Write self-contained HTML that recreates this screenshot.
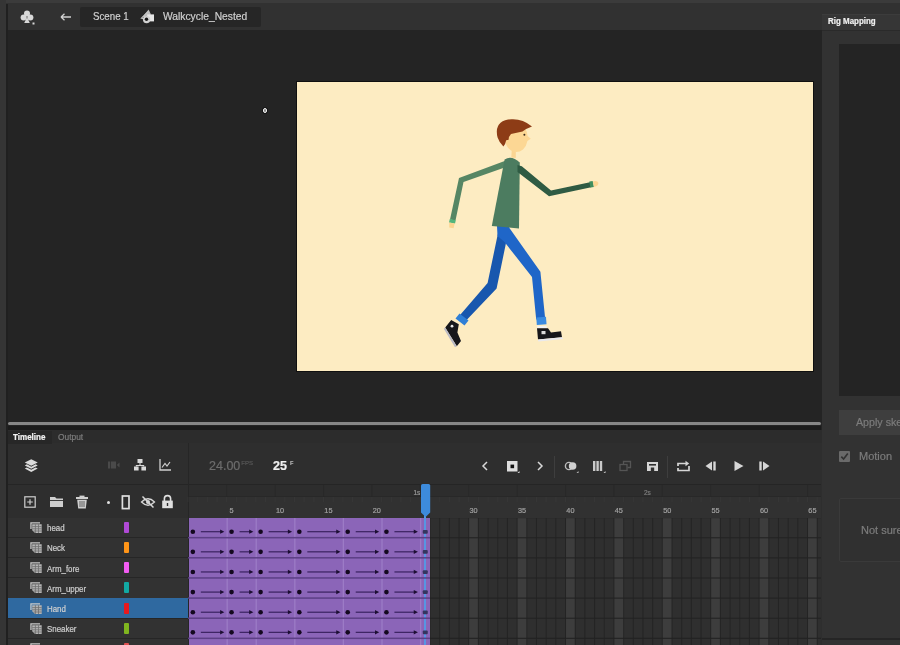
<!DOCTYPE html><html><head><meta charset="utf-8"><title>Animate</title><style>
*{margin:0;padding:0;box-sizing:border-box}
html,body{width:900px;height:645px;overflow:hidden;background:#242424;font-family:"Liberation Sans",sans-serif;}
#app{position:relative;width:900px;height:645px;overflow:hidden;background:#242424;filter:blur(0.45px)}
.abs{position:absolute}
.t{position:absolute;white-space:nowrap;line-height:1;-webkit-text-stroke:.2px currentColor}
</style></head><body><div id="app">
<div class="abs" style="left:0;top:0;width:900px;height:30px;background:#313131"></div>
<div class="abs" style="left:0;top:0;width:900px;height:3px;background:#3b3b3b"></div>
<div class="abs" style="left:80px;top:7px;width:181px;height:20px;background:#262626;border-radius:2px"></div>
<div class="abs" style="left:0;top:0;width:6px;height:645px;background:#353535"></div>
<div class="abs" style="left:6px;top:4px;width:1.5px;height:641px;background:#202020"></div>
<div class="t" style="left:93px;top:11px;font-size:11px;color:#d0d0d0;transform:scaleX(.885);transform-origin:0 0">Scene 1</div>
<div class="t" style="left:163px;top:11px;font-size:11px;color:#d0d0d0;transform:scaleX(.935);transform-origin:0 0">Walkcycle_Nested</div>
<svg class="abs" style="left:19px;top:9.3px" width="18" height="18" viewBox="0 0 18 18"><g fill="#d8d8d8"><circle cx="8" cy="4.6" r="3"/><circle cx="4.6" cy="8.6" r="3"/><circle cx="11.4" cy="8.6" r="3"/><path d="M8 8 L5.2 14 H10.8 Z"/><rect x="13.5" y="13.5" width="2" height="2"/></g></svg>
<svg class="abs" style="left:60px;top:11px" width="12" height="12" viewBox="0 0 12 12"><path d="M1 6 H11 M1 6 L4.5 2.8 M1 6 L4.5 9.2" stroke="#d0d0d0" stroke-width="1.3" fill="none"/></svg>
<svg class="abs" style="left:140px;top:8px" width="16" height="18" viewBox="140 8 16 18"><path d="M148.6 9.6 L151 14.6 L145 17 L142 17.6Z" fill="#bdbdbd"/><path d="M148.4 11.5 L141.4 18.2 L145 19" stroke="#c4c4c4" stroke-width="1.1" fill="none"/><rect x="147.2" y="14.4" width="6.8" height="7" fill="#e6e6e6"/><circle cx="146.6" cy="19.6" r="3.7" fill="#d2d2d2"/><circle cx="146.5" cy="19.3" r="1.7" fill="#161616"/></svg>
<div class="abs" style="left:296px;top:81px;width:518px;height:291px;background:#101010"></div>
<div class="abs" style="left:297px;top:82px;width:516px;height:289px;background:#fdecc2"></div>
<div class="abs" style="left:262.6px;top:108px;width:4.6px;height:4.6px;border-radius:50%;border:1.3px solid #f0f0f0;background:#888;box-shadow:0 0 0 .8px #111"></div>
<svg class="abs" style="left:297px;top:82px" width="516" height="289" viewBox="297 82 516 289">
<!-- back arm -->
<path d="M506 160.5 L459 178 L450 219.5 L455.5 220.5 L463.5 182 L507.5 166.5Z" fill="#568664"/>
<path d="M449.8 219 L455.8 220.2 L455 223.6 L449 222.4Z" fill="#52b57c"/>
<path d="M449.3 222.4 L454.6 223.5 L453.6 228.2 L449.2 227.4Z" fill="#fbd592"/>
<!-- back leg -->
<path d="M499.5 226 L509.5 226 L496.6 288.5 L465.2 321.6 L458.8 316.4 L487.6 283Z" fill="#1857ae"/>
<path d="M459.5 313.5 L468.5 320.5 L464.5 325.5 L455.5 318.5Z" fill="#2f7fd6"/>
<!-- back shoe -->
<path d="M451.2 320 L458.8 324.2 L457.4 332.5 L461 341 L456.8 346.2 L445.2 327.5Z" fill="#17171b"/>
<path d="M445.2 327.5 L456.8 346.2 L455 347.2 L443.8 328.8Z" fill="#b9b9c4"/>
<circle cx="452" cy="326.2" r="1.4" fill="#e8e8e8"/>
<!-- front leg -->
<path d="M497 226 L508 226 L540.4 271.8 L545.2 319 L536.2 319.5 L532 277 L504.5 242 L497.5 236Z" fill="#1f66c8"/>
<path d="M536.3 317.5 L546 316.8 L546.5 324.3 L536.8 325Z" fill="#3a8be0"/>
<!-- front shoe -->
<path d="M537.5 326 L546.5 326 L547 328.3 L537 328.3Z" fill="#f2f2f2"/>
<path d="M537 328.3 L548 328.3 L551 332.5 L561 331.2 L562 337.3 L538 339.6Z" fill="#17171b"/>
<path d="M538 339.6 L562 337.3 L563.3 339 L538.3 341.6Z" fill="#e9e9ee"/>
<path d="M541.5 331 h4 v3.2 h-4Z" fill="#dcdcdc"/>
<!-- torso -->
<path d="M504.6 159.6 Q511.5 154.8 519.8 162.6 L519 228.5 L491.8 226Z" fill="#4c7c60"/>
<!-- neck -->
<path d="M511.8 149.5 L515.8 149.5 L515.8 158 L511.3 157.6Z" fill="#fbd592"/>
<!-- head -->
<path d="M505 136 Q504.6 146.5 511 150.6 Q517.5 153.8 523 149.4 Q526.6 146 527.4 141 L530.8 138.8 L527.6 136 Q527.4 132 525.6 129.5 L508 130Z" fill="#fcd794"/>
<path d="M496.8 131.5 Q497 120 511.5 119.2 Q522.5 118.6 532 126.4 Q526.5 128.2 522.5 131.6 L511 134 Q508.6 136.4 508.6 139.8 L506.2 140.2 Q505.6 143.8 503.4 146.4 Q499.4 143 497.6 137.5 Q496.8 134.5 496.8 131.5Z" fill="#8d3c16"/>
<circle cx="524.4" cy="134.8" r="1" fill="#3a2a1a"/>
<!-- front arm -->
<path d="M517.5 165 L521.8 166.3 L551 190.5 L590 182.3 L591.2 187.3 L549 196.2 L517.5 172Z" fill="#2f5b43"/>
<path d="M589.3 181.6 L592.7 181 L593.9 187 L590.4 187.6Z" fill="#3f8e5e"/>
<path d="M592.8 181.4 Q597.5 180.2 598.3 182.8 Q598.8 186 594 187Z" fill="#fbd592"/>
</svg>
<div class="abs" style="left:8px;top:421.6px;width:813px;height:3.4px;background:#868686;border-radius:1.5px"></div>
<div class="abs" style="left:8px;top:425.5px;width:813px;height:5px;background:#1b1b1b"></div>
<div class="abs" style="left:822px;top:0;width:78px;height:645px;background:#323232"></div>
<div class="abs" style="left:822px;top:0;width:78px;height:3px;background:#3b3b3b"></div>
<div class="abs" style="left:822px;top:3px;width:78px;height:11px;background:#313131"></div>
<div class="abs" style="left:822px;top:14px;width:78px;height:16px;background:#363636"></div>
<div class="abs" style="left:822px;top:14px;width:78px;height:1px;background:#3c3c3c"></div>
<div class="abs" style="left:822px;top:30px;width:78px;height:1px;background:#2a2a2a"></div>
<div class="t" style="left:828px;top:17px;font-size:8.5px;font-weight:bold;color:#f0f0f0;transform:scaleX(.935);transform-origin:0 0">Rig Mapping</div>
<div class="abs" style="left:839px;top:44px;width:61px;height:352px;background:#242424"></div>
<div class="abs" style="left:839px;top:410px;width:61px;height:25px;background:#3e3e3e"></div>
<div class="t" style="left:856px;top:417px;font-size:11px;color:#7c7c7c;transform:scaleX(.97);transform-origin:0 0">Apply skeleton</div>
<div class="abs" style="left:839px;top:451px;width:11px;height:11px;background:#6a6a6a;border-radius:1px"></div>
<svg class="abs" style="left:839px;top:451px" width="11" height="11" viewBox="0 0 11 11"><path d="M2.3 5.6 L4.6 8 L8.8 2.6" stroke="#323232" stroke-width="1.7" fill="none"/></svg>
<div class="t" style="left:859px;top:451px;font-size:11px;color:#7c7c7c">Motion</div>
<div class="abs" style="left:839px;top:498px;width:70px;height:64px;border:1px solid #3a3a3a;border-radius:2px;background:#303030"></div>
<div class="t" style="left:861px;top:525px;font-size:11px;color:#7c7c7c">Not sure</div>
<div class="abs" style="left:822px;top:637.8px;width:78px;height:1.8px;background:#252525"></div>
<div class="abs" style="left:8px;top:430px;width:814px;height:215px;background:#2e2e2e"></div>
<div class="abs" style="left:8px;top:430px;width:814px;height:13px;background:#2c2c2c"></div>
<div class="abs" style="left:8px;top:430.5px;width:44px;height:13px;background:#272727"></div>
<div class="t" style="left:13px;top:433px;font-size:8.4px;font-weight:bold;color:#f2f2f2;transform:scaleX(.96);transform-origin:0 0">Timeline</div>
<div class="t" style="left:58px;top:433px;font-size:8.4px;color:#7c7c7c;transform:scaleX(1.0);transform-origin:0 0">Output</div>
<div class="abs" style="left:8px;top:484px;width:813px;height:1px;background:#252525"></div>
<div class="abs" style="left:188px;top:443px;width:1px;height:202px;background:#262626"></div>
<div class="t" style="left:209px;top:460.4px;font-size:12.5px;color:#6d6d6d">24.00<span style="font-size:6px;position:relative;top:-5px;left:1px;color:#565656">FPS</span></div>
<div class="t" style="left:273px;top:460.4px;font-size:12.5px;font-weight:bold;color:#f0f0f0">25<span style="font-size:5.5px;position:relative;top:-5.5px;left:3px;color:#b0b0b0">F</span></div>
<svg class="abs" style="left:23px;top:458px" width="16.5" height="16.5" viewBox="0 0 14 14"><g fill="#dcdcdc"><path d="M7 1 L12.5 3.8 L7 6.6 L1.5 3.8Z"/><path d="M1.5 6.3 L3.3 5.4 L7 7.4 L10.7 5.4 L12.5 6.3 L7 9.2Z"/><path d="M1.5 8.9 L3.3 8 L7 10 L10.7 8 L12.5 8.9 L7 11.8Z"/></g></svg>
<svg class="abs" style="left:107px;top:459px" width="14" height="12" viewBox="0 0 14 12"><g fill="#4a4a4a"><rect x="1" y="2.5" width="2" height="7"/><rect x="3.8" y="2.5" width="5.2" height="7"/><path d="M9.8 6 L12.5 3.6 V8.4Z"/></g></svg>
<svg class="abs" style="left:133px;top:458px" width="14" height="14" viewBox="0 0 14 14"><g fill="#d8d8d8"><rect x="4.5" y="1" width="5" height="4"/><rect x="1" y="8.5" width="4.6" height="4"/><rect x="8.4" y="8.5" width="4.6" height="4"/><path d="M6.5 5 h1 v2 h3.7 v1.5 h-1 v-.6 h-6.4 v.6 h-1 v-1.5 h3.7Z"/></g></svg>
<svg class="abs" style="left:158px;top:458px" width="14" height="14" viewBox="0 0 14 14"><path d="M2 1 V12 H13" stroke="#cfcfcf" stroke-width="1.3" fill="none"/><path d="M4 9.5 L7 5.5 L9 8 L12 4" stroke="#cfcfcf" stroke-width="1.2" fill="none"/></svg>
<svg class="abs" style="left:480px;top:460px" width="10" height="12" viewBox="0 0 10 12"><path d="M7 2 L3 6 L7 10" stroke="#d8d8d8" stroke-width="1.5" fill="none"/></svg>
<svg class="abs" style="left:506px;top:460px" width="14" height="14" viewBox="0 0 14 14"><rect x="1" y="1" width="10.5" height="10.5" fill="#dedede"/><rect x="4.5" y="4.6" width="3.6" height="3.6" fill="#111"/><path d="M11.5 13 h2 v-2Z" fill="#d8d8d8"/></svg>
<svg class="abs" style="left:535px;top:460px" width="10" height="12" viewBox="0 0 10 12"><path d="M3 2 L7 6 L3 10" stroke="#d8d8d8" stroke-width="1.5" fill="none"/></svg>
<div class="abs" style="left:554px;top:456px;width:1px;height:22px;background:#3e3e3e"></div>
<svg class="abs" style="left:564px;top:460px" width="15" height="14" viewBox="0 0 15 14"><circle cx="5" cy="6" r="3.6" fill="none" stroke="#bdbdbd" stroke-width="1.4"/><circle cx="8.6" cy="6" r="3.8" fill="#d0d0d0"/><path d="M12.5 13 h2 v-2Z" fill="#bbb"/></svg>
<svg class="abs" style="left:592px;top:460px" width="14" height="14" viewBox="0 0 14 14"><g fill="#c9c9c9"><rect x="1" y="1" width="2.4" height="10"/><rect x="4.4" y="1" width="2.4" height="10"/><rect x="7.8" y="1" width="2.4" height="10"/><path d="M11.5 13 h2 v-2Z"/></g></svg>
<svg class="abs" style="left:619px;top:460px" width="14" height="14" viewBox="0 0 14 14"><g fill="none" stroke="#555" stroke-width="1.3"><rect x="1" y="4.5" width="7" height="6"/><path d="M4.5 4 V1.5 H11.5 V7.5 H8.5"/></g></svg>
<svg class="abs" style="left:646px;top:460px" width="14" height="14" viewBox="0 0 14 14"><path d="M1 2 H12 V11 H8.2 V7.5 H4.8 V11 H1Z" fill="#d6d6d6"/><rect x="3" y="4" width="7" height="1.6" fill="#2e2e2e"/></svg>
<div class="abs" style="left:667.3px;top:456px;width:1px;height:22px;background:#3e3e3e"></div>
<svg class="abs" style="left:676px;top:460px" width="15" height="13" viewBox="0 0 15 13"><path d="M2 6 V3.5 H11 M13 6 V10.5 H2 V8" stroke="#d6d6d6" stroke-width="1.7" fill="none"/><path d="M9.5 0.7 L13.2 3.5 L9.5 6.3Z" fill="#d6d6d6"/></svg>
<svg class="abs" style="left:704px;top:460px" width="13" height="12" viewBox="0 0 13 12"><path d="M8 1.5 L1.5 6 L8 10.5Z" fill="#d6d6d6"/><rect x="9.3" y="1.5" width="2.4" height="9" fill="#d6d6d6"/></svg>
<svg class="abs" style="left:733px;top:460px" width="12" height="12" viewBox="0 0 12 12"><path d="M1.5 1 L10.5 6 L1.5 11Z" fill="#d6d6d6"/></svg>
<svg class="abs" style="left:758px;top:460px" width="13" height="12" viewBox="0 0 13 12"><rect x="1.3" y="1.5" width="2.4" height="9" fill="#d6d6d6"/><path d="M5 1.5 L11.5 6 L5 10.5Z" fill="#d6d6d6"/></svg>
<svg class="abs" style="left:24px;top:496px" width="12" height="12" viewBox="0 0 12 12"><rect x="0.8" y="0.8" width="10.4" height="10.4" fill="none" stroke="#cfcfcf" stroke-width="1.2"/><path d="M6 3.2 V8.8 M3.2 6 H8.8" stroke="#cfcfcf" stroke-width="1.2"/></svg>
<svg class="abs" style="left:49px;top:495px" width="15" height="13" viewBox="0 0 15 13"><path d="M1 2 H6 L7.5 3.6 H14 V12 H1Z" fill="#cfcfcf"/><rect x="1" y="5" width="13" height="0.9" fill="#2e2e2e"/></svg>
<svg class="abs" style="left:75px;top:495px" width="14" height="14" viewBox="0 0 14 14"><g fill="#cfcfcf"><rect x="4.5" y="0.6" width="5" height="1.6"/><rect x="1" y="2" width="12" height="2"/><path d="M2.2 4.8 H11.8 L10.8 13.4 H3.2Z"/></g><path d="M5 6 V12 M7 6 V12 M9 6 V12" stroke="#2e2e2e" stroke-width="0.7"/></svg>
<div class="abs" style="left:106.5px;top:500.5px;width:3px;height:3px;border-radius:50%;background:#e0e0e0"></div>
<svg class="abs" style="left:121px;top:495px" width="10" height="15" viewBox="0 0 10 15"><rect x="1.4" y="1" width="6.6" height="12.6" fill="none" stroke="#e0e0e0" stroke-width="1.7"/></svg>
<svg class="abs" style="left:140px;top:495px" width="16" height="14" viewBox="0 0 16 14"><path d="M1.5 7 Q8 0.5 14.5 7 Q8 13.5 1.5 7Z" fill="none" stroke="#d8d8d8" stroke-width="1.3"/><circle cx="8" cy="7" r="2" fill="#d8d8d8"/><path d="M2.5 1.5 L13.5 12.5" stroke="#d8d8d8" stroke-width="1.5"/></svg>
<svg class="abs" style="left:161px;top:494px" width="13" height="15" viewBox="0 0 13 15"><path d="M3.4 7 V4.6 Q3.4 1.6 6.5 1.6 Q9.6 1.6 9.6 4.6 V7" fill="none" stroke="#e0e0e0" stroke-width="1.6"/><rect x="1.2" y="6.6" width="10.6" height="7.6" fill="#e0e0e0"/><rect x="5.8" y="9" width="1.4" height="3" fill="#2e2e2e"/></svg>
<div class="abs" style="left:189px;top:485px;width:632px;height:33px;background:#2d2d2d"></div>
<div class="abs" style="left:189px;top:496.5px;width:632px;height:21.5px;background:#313131"></div>
<div class="abs" style="left:189px;top:496px;width:632px;height:1px;background:#282828"></div>
<svg class="abs" style="left:0;top:485px" width="821" height="33" viewBox="0 485 821 33"><rect x="187.50" y="497" width="1" height="5" fill="#3a3a3a" opacity=".6"/><rect x="197.18" y="497" width="1" height="5" fill="#3a3a3a" opacity=".6"/><rect x="206.86" y="497" width="1" height="5" fill="#3a3a3a" opacity=".6"/><rect x="216.54" y="497" width="1" height="5" fill="#3a3a3a" opacity=".6"/><rect x="226.22" y="485" width="1" height="12" fill="#262626" opacity=".7"/><rect x="226.22" y="497" width="1" height="5" fill="#3a3a3a" opacity=".6"/><rect x="235.90" y="497" width="1" height="5" fill="#3a3a3a" opacity=".6"/><rect x="245.58" y="497" width="1" height="5" fill="#3a3a3a" opacity=".6"/><rect x="255.26" y="497" width="1" height="5" fill="#3a3a3a" opacity=".6"/><rect x="264.94" y="497" width="1" height="5" fill="#3a3a3a" opacity=".6"/><rect x="274.62" y="485" width="1" height="12" fill="#262626" opacity=".7"/><rect x="274.62" y="497" width="1" height="5" fill="#3a3a3a" opacity=".6"/><rect x="284.30" y="497" width="1" height="5" fill="#3a3a3a" opacity=".6"/><rect x="293.98" y="497" width="1" height="5" fill="#3a3a3a" opacity=".6"/><rect x="303.66" y="497" width="1" height="5" fill="#3a3a3a" opacity=".6"/><rect x="313.34" y="497" width="1" height="5" fill="#3a3a3a" opacity=".6"/><rect x="323.02" y="485" width="1" height="12" fill="#262626" opacity=".7"/><rect x="323.02" y="497" width="1" height="5" fill="#3a3a3a" opacity=".6"/><rect x="332.70" y="497" width="1" height="5" fill="#3a3a3a" opacity=".6"/><rect x="342.38" y="497" width="1" height="5" fill="#3a3a3a" opacity=".6"/><rect x="352.06" y="497" width="1" height="5" fill="#3a3a3a" opacity=".6"/><rect x="361.74" y="497" width="1" height="5" fill="#3a3a3a" opacity=".6"/><rect x="371.42" y="485" width="1" height="12" fill="#262626" opacity=".7"/><rect x="371.42" y="497" width="1" height="5" fill="#3a3a3a" opacity=".6"/><rect x="381.10" y="497" width="1" height="5" fill="#3a3a3a" opacity=".6"/><rect x="390.78" y="497" width="1" height="5" fill="#3a3a3a" opacity=".6"/><rect x="400.46" y="497" width="1" height="5" fill="#3a3a3a" opacity=".6"/><rect x="410.14" y="497" width="1" height="5" fill="#3a3a3a" opacity=".6"/><rect x="419.82" y="485" width="1" height="12" fill="#262626" opacity=".7"/><rect x="419.82" y="497" width="1" height="5" fill="#3a3a3a" opacity=".6"/><rect x="429.50" y="497" width="1" height="5" fill="#3a3a3a" opacity=".6"/><rect x="439.18" y="497" width="1" height="5" fill="#3a3a3a" opacity=".6"/><rect x="448.86" y="497" width="1" height="5" fill="#3a3a3a" opacity=".6"/><rect x="458.54" y="497" width="1" height="5" fill="#3a3a3a" opacity=".6"/><rect x="468.22" y="485" width="1" height="12" fill="#262626" opacity=".7"/><rect x="468.22" y="497" width="1" height="5" fill="#3a3a3a" opacity=".6"/><rect x="477.90" y="497" width="1" height="5" fill="#3a3a3a" opacity=".6"/><rect x="487.58" y="497" width="1" height="5" fill="#3a3a3a" opacity=".6"/><rect x="497.26" y="497" width="1" height="5" fill="#3a3a3a" opacity=".6"/><rect x="506.94" y="497" width="1" height="5" fill="#3a3a3a" opacity=".6"/><rect x="516.62" y="485" width="1" height="12" fill="#262626" opacity=".7"/><rect x="516.62" y="497" width="1" height="5" fill="#3a3a3a" opacity=".6"/><rect x="526.30" y="497" width="1" height="5" fill="#3a3a3a" opacity=".6"/><rect x="535.98" y="497" width="1" height="5" fill="#3a3a3a" opacity=".6"/><rect x="545.66" y="497" width="1" height="5" fill="#3a3a3a" opacity=".6"/><rect x="555.34" y="497" width="1" height="5" fill="#3a3a3a" opacity=".6"/><rect x="565.02" y="485" width="1" height="12" fill="#262626" opacity=".7"/><rect x="565.02" y="497" width="1" height="5" fill="#3a3a3a" opacity=".6"/><rect x="574.70" y="497" width="1" height="5" fill="#3a3a3a" opacity=".6"/><rect x="584.38" y="497" width="1" height="5" fill="#3a3a3a" opacity=".6"/><rect x="594.06" y="497" width="1" height="5" fill="#3a3a3a" opacity=".6"/><rect x="603.74" y="497" width="1" height="5" fill="#3a3a3a" opacity=".6"/><rect x="613.42" y="485" width="1" height="12" fill="#262626" opacity=".7"/><rect x="613.42" y="497" width="1" height="5" fill="#3a3a3a" opacity=".6"/><rect x="623.10" y="497" width="1" height="5" fill="#3a3a3a" opacity=".6"/><rect x="632.78" y="497" width="1" height="5" fill="#3a3a3a" opacity=".6"/><rect x="642.46" y="497" width="1" height="5" fill="#3a3a3a" opacity=".6"/><rect x="652.14" y="497" width="1" height="5" fill="#3a3a3a" opacity=".6"/><rect x="661.82" y="485" width="1" height="12" fill="#262626" opacity=".7"/><rect x="661.82" y="497" width="1" height="5" fill="#3a3a3a" opacity=".6"/><rect x="671.50" y="497" width="1" height="5" fill="#3a3a3a" opacity=".6"/><rect x="681.18" y="497" width="1" height="5" fill="#3a3a3a" opacity=".6"/><rect x="690.86" y="497" width="1" height="5" fill="#3a3a3a" opacity=".6"/><rect x="700.54" y="497" width="1" height="5" fill="#3a3a3a" opacity=".6"/><rect x="710.22" y="485" width="1" height="12" fill="#262626" opacity=".7"/><rect x="710.22" y="497" width="1" height="5" fill="#3a3a3a" opacity=".6"/><rect x="719.90" y="497" width="1" height="5" fill="#3a3a3a" opacity=".6"/><rect x="729.58" y="497" width="1" height="5" fill="#3a3a3a" opacity=".6"/><rect x="739.26" y="497" width="1" height="5" fill="#3a3a3a" opacity=".6"/><rect x="748.94" y="497" width="1" height="5" fill="#3a3a3a" opacity=".6"/><rect x="758.62" y="485" width="1" height="12" fill="#262626" opacity=".7"/><rect x="758.62" y="497" width="1" height="5" fill="#3a3a3a" opacity=".6"/><rect x="768.30" y="497" width="1" height="5" fill="#3a3a3a" opacity=".6"/><rect x="777.98" y="497" width="1" height="5" fill="#3a3a3a" opacity=".6"/><rect x="787.66" y="497" width="1" height="5" fill="#3a3a3a" opacity=".6"/><rect x="797.34" y="497" width="1" height="5" fill="#3a3a3a" opacity=".6"/><rect x="807.02" y="485" width="1" height="12" fill="#262626" opacity=".7"/><rect x="807.02" y="497" width="1" height="5" fill="#3a3a3a" opacity=".6"/><rect x="816.70" y="497" width="1" height="5" fill="#3a3a3a" opacity=".6"/></svg>
<div class="t" style="left:413.5px;top:489.5px;font-size:6.5px;color:#999">1s</div>
<div class="t" style="left:644px;top:489.5px;font-size:6.5px;color:#7d7d7d">2s</div>
<div class="t" style="left:221.6px;top:507px;width:20px;text-align:center;font-size:7.3px;color:#a0a0a0">5</div>
<div class="t" style="left:270.0px;top:507px;width:20px;text-align:center;font-size:7.3px;color:#a0a0a0">10</div>
<div class="t" style="left:318.4px;top:507px;width:20px;text-align:center;font-size:7.3px;color:#a0a0a0">15</div>
<div class="t" style="left:366.8px;top:507px;width:20px;text-align:center;font-size:7.3px;color:#a0a0a0">20</div>
<div class="t" style="left:463.6px;top:507px;width:20px;text-align:center;font-size:7.3px;color:#a0a0a0">30</div>
<div class="t" style="left:512.0px;top:507px;width:20px;text-align:center;font-size:7.3px;color:#a0a0a0">35</div>
<div class="t" style="left:560.4px;top:507px;width:20px;text-align:center;font-size:7.3px;color:#a0a0a0">40</div>
<div class="t" style="left:608.8px;top:507px;width:20px;text-align:center;font-size:7.3px;color:#a0a0a0">45</div>
<div class="t" style="left:657.2px;top:507px;width:20px;text-align:center;font-size:7.3px;color:#a0a0a0">50</div>
<div class="t" style="left:705.6px;top:507px;width:20px;text-align:center;font-size:7.3px;color:#a0a0a0">55</div>
<div class="t" style="left:754.0px;top:507px;width:20px;text-align:center;font-size:7.3px;color:#a0a0a0">60</div>
<div class="t" style="left:802.4px;top:507px;width:20px;text-align:center;font-size:7.3px;color:#a0a0a0">65</div>
<div class="abs" style="left:189px;top:518px;width:632px;height:127px;background:#2f2f2f"></div>
<div class="abs" style="left:468.72px;top:518px;width:9.68px;height:127px;background:#3d3d3d"></div>
<div class="abs" style="left:517.12px;top:518px;width:9.68px;height:127px;background:#3d3d3d"></div>
<div class="abs" style="left:565.52px;top:518px;width:9.68px;height:127px;background:#3d3d3d"></div>
<div class="abs" style="left:613.92px;top:518px;width:9.68px;height:127px;background:#3d3d3d"></div>
<div class="abs" style="left:662.32px;top:518px;width:9.68px;height:127px;background:#3d3d3d"></div>
<div class="abs" style="left:710.72px;top:518px;width:9.68px;height:127px;background:#3d3d3d"></div>
<div class="abs" style="left:759.12px;top:518px;width:9.68px;height:127px;background:#3d3d3d"></div>
<div class="abs" style="left:807.52px;top:518px;width:9.68px;height:127px;background:#3d3d3d"></div>
<svg class="abs" style="left:0;top:518px" width="821" height="127" viewBox="0 518 821 127"><rect x="429.50" y="518" width="1" height="127" fill="#222" opacity=".8"/><rect x="439.18" y="518" width="1" height="127" fill="#222" opacity=".8"/><rect x="448.86" y="518" width="1" height="127" fill="#222" opacity=".8"/><rect x="458.54" y="518" width="1" height="127" fill="#222" opacity=".8"/><rect x="468.22" y="518" width="1" height="127" fill="#222" opacity=".8"/><rect x="477.90" y="518" width="1" height="127" fill="#222" opacity=".8"/><rect x="487.58" y="518" width="1" height="127" fill="#222" opacity=".8"/><rect x="497.26" y="518" width="1" height="127" fill="#222" opacity=".8"/><rect x="506.94" y="518" width="1" height="127" fill="#222" opacity=".8"/><rect x="516.62" y="518" width="1" height="127" fill="#222" opacity=".8"/><rect x="526.30" y="518" width="1" height="127" fill="#222" opacity=".8"/><rect x="535.98" y="518" width="1" height="127" fill="#222" opacity=".8"/><rect x="545.66" y="518" width="1" height="127" fill="#222" opacity=".8"/><rect x="555.34" y="518" width="1" height="127" fill="#222" opacity=".8"/><rect x="565.02" y="518" width="1" height="127" fill="#222" opacity=".8"/><rect x="574.70" y="518" width="1" height="127" fill="#222" opacity=".8"/><rect x="584.38" y="518" width="1" height="127" fill="#222" opacity=".8"/><rect x="594.06" y="518" width="1" height="127" fill="#222" opacity=".8"/><rect x="603.74" y="518" width="1" height="127" fill="#222" opacity=".8"/><rect x="613.42" y="518" width="1" height="127" fill="#222" opacity=".8"/><rect x="623.10" y="518" width="1" height="127" fill="#222" opacity=".8"/><rect x="632.78" y="518" width="1" height="127" fill="#222" opacity=".8"/><rect x="642.46" y="518" width="1" height="127" fill="#222" opacity=".8"/><rect x="652.14" y="518" width="1" height="127" fill="#222" opacity=".8"/><rect x="661.82" y="518" width="1" height="127" fill="#222" opacity=".8"/><rect x="671.50" y="518" width="1" height="127" fill="#222" opacity=".8"/><rect x="681.18" y="518" width="1" height="127" fill="#222" opacity=".8"/><rect x="690.86" y="518" width="1" height="127" fill="#222" opacity=".8"/><rect x="700.54" y="518" width="1" height="127" fill="#222" opacity=".8"/><rect x="710.22" y="518" width="1" height="127" fill="#222" opacity=".8"/><rect x="719.90" y="518" width="1" height="127" fill="#222" opacity=".8"/><rect x="729.58" y="518" width="1" height="127" fill="#222" opacity=".8"/><rect x="739.26" y="518" width="1" height="127" fill="#222" opacity=".8"/><rect x="748.94" y="518" width="1" height="127" fill="#222" opacity=".8"/><rect x="758.62" y="518" width="1" height="127" fill="#222" opacity=".8"/><rect x="768.30" y="518" width="1" height="127" fill="#222" opacity=".8"/><rect x="777.98" y="518" width="1" height="127" fill="#222" opacity=".8"/><rect x="787.66" y="518" width="1" height="127" fill="#222" opacity=".8"/><rect x="797.34" y="518" width="1" height="127" fill="#222" opacity=".8"/><rect x="807.02" y="518" width="1" height="127" fill="#222" opacity=".8"/><rect x="816.70" y="518" width="1" height="127" fill="#222" opacity=".8"/><rect x="826.38" y="518" width="1" height="127" fill="#222" opacity=".8"/><rect x="430" y="517.00" width="391" height="1.2" fill="#222" opacity=".9"/><rect x="430" y="537.13" width="391" height="1.2" fill="#222" opacity=".9"/><rect x="430" y="557.26" width="391" height="1.2" fill="#222" opacity=".9"/><rect x="430" y="577.39" width="391" height="1.2" fill="#222" opacity=".9"/><rect x="430" y="597.52" width="391" height="1.2" fill="#222" opacity=".9"/><rect x="430" y="617.65" width="391" height="1.2" fill="#222" opacity=".9"/><rect x="430" y="637.78" width="391" height="1.2" fill="#222" opacity=".9"/><rect x="430" y="657.91" width="391" height="1.2" fill="#222" opacity=".9"/></svg>
<div class="abs" style="left:188.5px;top:518px;width:241.50px;height:127px;background:#8b65b8"></div>
<div class="abs" style="left:424.22px;top:510px;width:1.6px;height:135px;background:#5796e2"></div>
<svg class="abs" style="left:0;top:518px" width="821" height="127" viewBox="0 518 821 127"><rect x="226.62" y="518" width="1" height="127" fill="#a88bd0" opacity=".75"/><rect x="255.66" y="518" width="1" height="127" fill="#a88bd0" opacity=".75"/><rect x="294.38" y="518" width="1" height="127" fill="#a88bd0" opacity=".75"/><rect x="342.78" y="518" width="1" height="127" fill="#a88bd0" opacity=".75"/><rect x="381.50" y="518" width="1" height="127" fill="#a88bd0" opacity=".75"/><rect x="420.22" y="518" width="1" height="127" fill="#a88bd0" opacity=".75"/><rect x="188.0" y="536.93" width="242.00" height="1.5" fill="#5c3f85"/><circle cx="192.84" cy="531.70" r="2.3" fill="#14091f"/><rect x="200.84" y="531.10" width="21.48" height="1.2" fill="#3a2260"/><path d="M220.12 529.60 L224.32 531.70 L220.12 533.80Z" fill="#1d0f33"/><circle cx="231.56" cy="531.70" r="2.3" fill="#14091f"/><rect x="239.56" y="531.10" width="11.80" height="1.2" fill="#3a2260"/><path d="M249.16 529.60 L253.36 531.70 L249.16 533.80Z" fill="#1d0f33"/><circle cx="260.60" cy="531.70" r="2.3" fill="#14091f"/><rect x="268.60" y="531.10" width="21.48" height="1.2" fill="#3a2260"/><path d="M287.88 529.60 L292.08 531.70 L287.88 533.80Z" fill="#1d0f33"/><circle cx="299.32" cy="531.70" r="2.3" fill="#14091f"/><rect x="307.32" y="531.10" width="31.16" height="1.2" fill="#3a2260"/><path d="M336.28 529.60 L340.48 531.70 L336.28 533.80Z" fill="#1d0f33"/><circle cx="347.72" cy="531.70" r="2.3" fill="#14091f"/><rect x="355.72" y="531.10" width="21.48" height="1.2" fill="#3a2260"/><path d="M375.00 529.60 L379.20 531.70 L375.00 533.80Z" fill="#1d0f33"/><circle cx="386.44" cy="531.70" r="2.3" fill="#14091f"/><rect x="394.44" y="531.10" width="21.48" height="1.2" fill="#3a2260"/><path d="M413.72 529.60 L417.92 531.70 L413.72 533.80Z" fill="#1d0f33"/><rect x="422.76" y="529.90" width="5" height="3.8" rx="1" fill="#35355f"/><rect x="188.0" y="557.06" width="242.00" height="1.5" fill="#5c3f85"/><circle cx="192.84" cy="551.83" r="2.3" fill="#14091f"/><rect x="200.84" y="551.23" width="21.48" height="1.2" fill="#3a2260"/><path d="M220.12 549.73 L224.32 551.83 L220.12 553.93Z" fill="#1d0f33"/><circle cx="231.56" cy="551.83" r="2.3" fill="#14091f"/><rect x="239.56" y="551.23" width="11.80" height="1.2" fill="#3a2260"/><path d="M249.16 549.73 L253.36 551.83 L249.16 553.93Z" fill="#1d0f33"/><circle cx="260.60" cy="551.83" r="2.3" fill="#14091f"/><rect x="268.60" y="551.23" width="21.48" height="1.2" fill="#3a2260"/><path d="M287.88 549.73 L292.08 551.83 L287.88 553.93Z" fill="#1d0f33"/><circle cx="299.32" cy="551.83" r="2.3" fill="#14091f"/><rect x="307.32" y="551.23" width="31.16" height="1.2" fill="#3a2260"/><path d="M336.28 549.73 L340.48 551.83 L336.28 553.93Z" fill="#1d0f33"/><circle cx="347.72" cy="551.83" r="2.3" fill="#14091f"/><rect x="355.72" y="551.23" width="21.48" height="1.2" fill="#3a2260"/><path d="M375.00 549.73 L379.20 551.83 L375.00 553.93Z" fill="#1d0f33"/><circle cx="386.44" cy="551.83" r="2.3" fill="#14091f"/><rect x="394.44" y="551.23" width="21.48" height="1.2" fill="#3a2260"/><path d="M413.72 549.73 L417.92 551.83 L413.72 553.93Z" fill="#1d0f33"/><rect x="422.76" y="550.03" width="5" height="3.8" rx="1" fill="#35355f"/><rect x="188.0" y="577.19" width="242.00" height="1.5" fill="#5c3f85"/><circle cx="192.84" cy="571.96" r="2.3" fill="#14091f"/><rect x="200.84" y="571.36" width="21.48" height="1.2" fill="#3a2260"/><path d="M220.12 569.86 L224.32 571.96 L220.12 574.06Z" fill="#1d0f33"/><circle cx="231.56" cy="571.96" r="2.3" fill="#14091f"/><rect x="239.56" y="571.36" width="11.80" height="1.2" fill="#3a2260"/><path d="M249.16 569.86 L253.36 571.96 L249.16 574.06Z" fill="#1d0f33"/><circle cx="260.60" cy="571.96" r="2.3" fill="#14091f"/><rect x="268.60" y="571.36" width="21.48" height="1.2" fill="#3a2260"/><path d="M287.88 569.86 L292.08 571.96 L287.88 574.06Z" fill="#1d0f33"/><circle cx="299.32" cy="571.96" r="2.3" fill="#14091f"/><rect x="307.32" y="571.36" width="31.16" height="1.2" fill="#3a2260"/><path d="M336.28 569.86 L340.48 571.96 L336.28 574.06Z" fill="#1d0f33"/><circle cx="347.72" cy="571.96" r="2.3" fill="#14091f"/><rect x="355.72" y="571.36" width="21.48" height="1.2" fill="#3a2260"/><path d="M375.00 569.86 L379.20 571.96 L375.00 574.06Z" fill="#1d0f33"/><circle cx="386.44" cy="571.96" r="2.3" fill="#14091f"/><rect x="394.44" y="571.36" width="21.48" height="1.2" fill="#3a2260"/><path d="M413.72 569.86 L417.92 571.96 L413.72 574.06Z" fill="#1d0f33"/><rect x="422.76" y="570.16" width="5" height="3.8" rx="1" fill="#35355f"/><rect x="188.0" y="597.32" width="242.00" height="1.5" fill="#5c3f85"/><circle cx="192.84" cy="592.09" r="2.3" fill="#14091f"/><rect x="200.84" y="591.49" width="21.48" height="1.2" fill="#3a2260"/><path d="M220.12 589.99 L224.32 592.09 L220.12 594.19Z" fill="#1d0f33"/><circle cx="231.56" cy="592.09" r="2.3" fill="#14091f"/><rect x="239.56" y="591.49" width="11.80" height="1.2" fill="#3a2260"/><path d="M249.16 589.99 L253.36 592.09 L249.16 594.19Z" fill="#1d0f33"/><circle cx="260.60" cy="592.09" r="2.3" fill="#14091f"/><rect x="268.60" y="591.49" width="21.48" height="1.2" fill="#3a2260"/><path d="M287.88 589.99 L292.08 592.09 L287.88 594.19Z" fill="#1d0f33"/><circle cx="299.32" cy="592.09" r="2.3" fill="#14091f"/><rect x="307.32" y="591.49" width="31.16" height="1.2" fill="#3a2260"/><path d="M336.28 589.99 L340.48 592.09 L336.28 594.19Z" fill="#1d0f33"/><circle cx="347.72" cy="592.09" r="2.3" fill="#14091f"/><rect x="355.72" y="591.49" width="21.48" height="1.2" fill="#3a2260"/><path d="M375.00 589.99 L379.20 592.09 L375.00 594.19Z" fill="#1d0f33"/><circle cx="386.44" cy="592.09" r="2.3" fill="#14091f"/><rect x="394.44" y="591.49" width="21.48" height="1.2" fill="#3a2260"/><path d="M413.72 589.99 L417.92 592.09 L413.72 594.19Z" fill="#1d0f33"/><rect x="422.76" y="590.29" width="5" height="3.8" rx="1" fill="#35355f"/><rect x="188.0" y="617.45" width="242.00" height="1.5" fill="#5c3f85"/><circle cx="192.84" cy="612.22" r="2.3" fill="#14091f"/><rect x="200.84" y="611.62" width="21.48" height="1.2" fill="#3a2260"/><path d="M220.12 610.12 L224.32 612.22 L220.12 614.32Z" fill="#1d0f33"/><circle cx="231.56" cy="612.22" r="2.3" fill="#14091f"/><rect x="239.56" y="611.62" width="11.80" height="1.2" fill="#3a2260"/><path d="M249.16 610.12 L253.36 612.22 L249.16 614.32Z" fill="#1d0f33"/><circle cx="260.60" cy="612.22" r="2.3" fill="#14091f"/><rect x="268.60" y="611.62" width="21.48" height="1.2" fill="#3a2260"/><path d="M287.88 610.12 L292.08 612.22 L287.88 614.32Z" fill="#1d0f33"/><circle cx="299.32" cy="612.22" r="2.3" fill="#14091f"/><rect x="307.32" y="611.62" width="31.16" height="1.2" fill="#3a2260"/><path d="M336.28 610.12 L340.48 612.22 L336.28 614.32Z" fill="#1d0f33"/><circle cx="347.72" cy="612.22" r="2.3" fill="#14091f"/><rect x="355.72" y="611.62" width="21.48" height="1.2" fill="#3a2260"/><path d="M375.00 610.12 L379.20 612.22 L375.00 614.32Z" fill="#1d0f33"/><circle cx="386.44" cy="612.22" r="2.3" fill="#14091f"/><rect x="394.44" y="611.62" width="21.48" height="1.2" fill="#3a2260"/><path d="M413.72 610.12 L417.92 612.22 L413.72 614.32Z" fill="#1d0f33"/><rect x="422.76" y="610.42" width="5" height="3.8" rx="1" fill="#35355f"/><rect x="188.0" y="637.58" width="242.00" height="1.5" fill="#5c3f85"/><circle cx="192.84" cy="632.35" r="2.3" fill="#14091f"/><rect x="200.84" y="631.75" width="21.48" height="1.2" fill="#3a2260"/><path d="M220.12 630.25 L224.32 632.35 L220.12 634.45Z" fill="#1d0f33"/><circle cx="231.56" cy="632.35" r="2.3" fill="#14091f"/><rect x="239.56" y="631.75" width="11.80" height="1.2" fill="#3a2260"/><path d="M249.16 630.25 L253.36 632.35 L249.16 634.45Z" fill="#1d0f33"/><circle cx="260.60" cy="632.35" r="2.3" fill="#14091f"/><rect x="268.60" y="631.75" width="21.48" height="1.2" fill="#3a2260"/><path d="M287.88 630.25 L292.08 632.35 L287.88 634.45Z" fill="#1d0f33"/><circle cx="299.32" cy="632.35" r="2.3" fill="#14091f"/><rect x="307.32" y="631.75" width="31.16" height="1.2" fill="#3a2260"/><path d="M336.28 630.25 L340.48 632.35 L336.28 634.45Z" fill="#1d0f33"/><circle cx="347.72" cy="632.35" r="2.3" fill="#14091f"/><rect x="355.72" y="631.75" width="21.48" height="1.2" fill="#3a2260"/><path d="M375.00 630.25 L379.20 632.35 L375.00 634.45Z" fill="#1d0f33"/><circle cx="386.44" cy="632.35" r="2.3" fill="#14091f"/><rect x="394.44" y="631.75" width="21.48" height="1.2" fill="#3a2260"/><path d="M413.72 630.25 L417.92 632.35 L413.72 634.45Z" fill="#1d0f33"/><rect x="422.76" y="630.55" width="5" height="3.8" rx="1" fill="#35355f"/><rect x="188.0" y="657.71" width="242.00" height="1.5" fill="#5c3f85"/><circle cx="192.84" cy="652.48" r="2.3" fill="#14091f"/><rect x="200.84" y="651.88" width="21.48" height="1.2" fill="#3a2260"/><path d="M220.12 650.38 L224.32 652.48 L220.12 654.58Z" fill="#1d0f33"/><circle cx="231.56" cy="652.48" r="2.3" fill="#14091f"/><rect x="239.56" y="651.88" width="11.80" height="1.2" fill="#3a2260"/><path d="M249.16 650.38 L253.36 652.48 L249.16 654.58Z" fill="#1d0f33"/><circle cx="260.60" cy="652.48" r="2.3" fill="#14091f"/><rect x="268.60" y="651.88" width="21.48" height="1.2" fill="#3a2260"/><path d="M287.88 650.38 L292.08 652.48 L287.88 654.58Z" fill="#1d0f33"/><circle cx="299.32" cy="652.48" r="2.3" fill="#14091f"/><rect x="307.32" y="651.88" width="31.16" height="1.2" fill="#3a2260"/><path d="M336.28 650.38 L340.48 652.48 L336.28 654.58Z" fill="#1d0f33"/><circle cx="347.72" cy="652.48" r="2.3" fill="#14091f"/><rect x="355.72" y="651.88" width="21.48" height="1.2" fill="#3a2260"/><path d="M375.00 650.38 L379.20 652.48 L375.00 654.58Z" fill="#1d0f33"/><circle cx="386.44" cy="652.48" r="2.3" fill="#14091f"/><rect x="394.44" y="651.88" width="21.48" height="1.2" fill="#3a2260"/><path d="M413.72 650.38 L417.92 652.48 L413.72 654.58Z" fill="#1d0f33"/><rect x="422.76" y="650.68" width="5" height="3.8" rx="1" fill="#35355f"/></svg>
<svg class="abs" style="left:420.62px;top:484px" width="10" height="34" viewBox="0 0 10 34"><path d="M1.6 0 H7.6 Q9.2 0 9.2 1.6 V28.5 L4.6 33 L0 28.5 V1.6 Q0 0 1.6 0Z" fill="#3d8bdc"/></svg>
<div class="abs" style="left:8px;top:518px;width:180px;height:127px;background:#323232"></div>
<div class="abs" style="left:8px;top:537.13px;width:180px;height:1px;background:#262626"></div>
<svg class="abs" style="left:30px;top:522.00px" width="12" height="12" viewBox="0 0 12 12"><path d="M0.3 0.3 H10 V1.6 H1.6 V7 H0.3Z" fill="#c9c9c9"/><path d="M2.2 2.2 H11.7 V11 H5 L2.2 8.2Z" fill="#b4b4b4"/><path d="M2.2 4.6 H11.7 M2.2 6.8 H11.7 M3.6 9 H11.7 M5.4 2.2 V11 M8.5 2.2 V11" stroke="#6e6e6e" stroke-width=".8"/></svg>
<div class="t" style="left:47px;top:524.30px;font-size:8.5px;color:#cfcfcf;transform:scaleX(.93);transform-origin:0 0">head</div>
<div class="abs" style="left:123.6px;top:522.00px;width:5.6px;height:11px;background:#b04ad6;border-radius:1px"></div>
<div class="abs" style="left:8px;top:557.26px;width:180px;height:1px;background:#262626"></div>
<svg class="abs" style="left:30px;top:542.13px" width="12" height="12" viewBox="0 0 12 12"><path d="M0.3 0.3 H10 V1.6 H1.6 V7 H0.3Z" fill="#c9c9c9"/><path d="M2.2 2.2 H11.7 V11 H5 L2.2 8.2Z" fill="#b4b4b4"/><path d="M2.2 4.6 H11.7 M2.2 6.8 H11.7 M3.6 9 H11.7 M5.4 2.2 V11 M8.5 2.2 V11" stroke="#6e6e6e" stroke-width=".8"/></svg>
<div class="t" style="left:47px;top:544.43px;font-size:8.5px;color:#cfcfcf;transform:scaleX(.93);transform-origin:0 0">Neck</div>
<div class="abs" style="left:123.6px;top:542.13px;width:5.6px;height:11px;background:#ff9518;border-radius:1px"></div>
<div class="abs" style="left:8px;top:577.39px;width:180px;height:1px;background:#262626"></div>
<svg class="abs" style="left:30px;top:562.26px" width="12" height="12" viewBox="0 0 12 12"><path d="M0.3 0.3 H10 V1.6 H1.6 V7 H0.3Z" fill="#c9c9c9"/><path d="M2.2 2.2 H11.7 V11 H5 L2.2 8.2Z" fill="#b4b4b4"/><path d="M2.2 4.6 H11.7 M2.2 6.8 H11.7 M3.6 9 H11.7 M5.4 2.2 V11 M8.5 2.2 V11" stroke="#6e6e6e" stroke-width=".8"/></svg>
<div class="t" style="left:47px;top:564.56px;font-size:8.5px;color:#cfcfcf;transform:scaleX(.93);transform-origin:0 0">Arm_fore</div>
<div class="abs" style="left:123.6px;top:562.26px;width:5.6px;height:11px;background:#f25cf2;border-radius:1px"></div>
<div class="abs" style="left:8px;top:597.52px;width:180px;height:1px;background:#262626"></div>
<svg class="abs" style="left:30px;top:582.39px" width="12" height="12" viewBox="0 0 12 12"><path d="M0.3 0.3 H10 V1.6 H1.6 V7 H0.3Z" fill="#c9c9c9"/><path d="M2.2 2.2 H11.7 V11 H5 L2.2 8.2Z" fill="#b4b4b4"/><path d="M2.2 4.6 H11.7 M2.2 6.8 H11.7 M3.6 9 H11.7 M5.4 2.2 V11 M8.5 2.2 V11" stroke="#6e6e6e" stroke-width=".8"/></svg>
<div class="t" style="left:47px;top:584.69px;font-size:8.5px;color:#cfcfcf;transform:scaleX(.93);transform-origin:0 0">Arm_upper</div>
<div class="abs" style="left:123.6px;top:582.39px;width:5.6px;height:11px;background:#12a9a3;border-radius:1px"></div>
<div class="abs" style="left:8px;top:598.22px;width:180px;height:19.73px;background:#2f69a0"></div>
<div class="abs" style="left:8px;top:617.65px;width:180px;height:1px;background:#262626"></div>
<svg class="abs" style="left:30px;top:602.52px" width="12" height="12" viewBox="0 0 12 12"><path d="M0.3 0.3 H10 V1.6 H1.6 V7 H0.3Z" fill="#c9c9c9"/><path d="M2.2 2.2 H11.7 V11 H5 L2.2 8.2Z" fill="#b4b4b4"/><path d="M2.2 4.6 H11.7 M2.2 6.8 H11.7 M3.6 9 H11.7 M5.4 2.2 V11 M8.5 2.2 V11" stroke="#6e6e6e" stroke-width=".8"/></svg>
<div class="t" style="left:47px;top:604.82px;font-size:8.5px;color:#cfcfcf;transform:scaleX(.93);transform-origin:0 0">Hand</div>
<div class="abs" style="left:123.6px;top:602.52px;width:5.6px;height:11px;background:#e8191e;border-radius:1px"></div>
<div class="abs" style="left:8px;top:637.78px;width:180px;height:1px;background:#262626"></div>
<svg class="abs" style="left:30px;top:622.65px" width="12" height="12" viewBox="0 0 12 12"><path d="M0.3 0.3 H10 V1.6 H1.6 V7 H0.3Z" fill="#c9c9c9"/><path d="M2.2 2.2 H11.7 V11 H5 L2.2 8.2Z" fill="#b4b4b4"/><path d="M2.2 4.6 H11.7 M2.2 6.8 H11.7 M3.6 9 H11.7 M5.4 2.2 V11 M8.5 2.2 V11" stroke="#6e6e6e" stroke-width=".8"/></svg>
<div class="t" style="left:47px;top:624.95px;font-size:8.5px;color:#cfcfcf;transform:scaleX(.93);transform-origin:0 0">Sneaker</div>
<div class="abs" style="left:123.6px;top:622.65px;width:5.6px;height:11px;background:#7fb51f;border-radius:1px"></div>
<div class="abs" style="left:8px;top:657.91px;width:180px;height:1px;background:#262626"></div>
<svg class="abs" style="left:30px;top:642.78px" width="12" height="12" viewBox="0 0 12 12"><path d="M0.3 0.3 H10 V1.6 H1.6 V7 H0.3Z" fill="#c9c9c9"/><path d="M2.2 2.2 H11.7 V11 H5 L2.2 8.2Z" fill="#b4b4b4"/><path d="M2.2 4.6 H11.7 M2.2 6.8 H11.7 M3.6 9 H11.7 M5.4 2.2 V11 M8.5 2.2 V11" stroke="#6e6e6e" stroke-width=".8"/></svg>
<div class="abs" style="left:123.6px;top:642.78px;width:5.6px;height:11px;background:#e05050;border-radius:1px"></div>
</div></body></html>
